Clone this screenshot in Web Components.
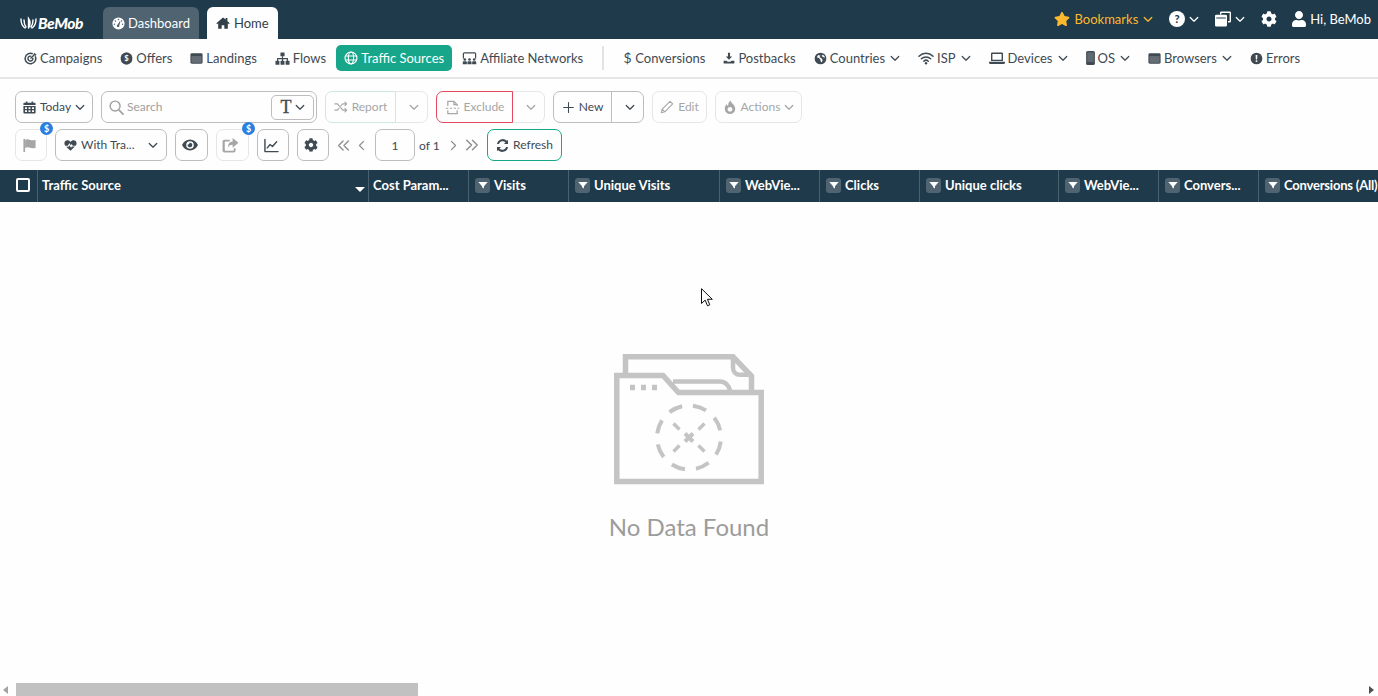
<!DOCTYPE html>
<html>
<head>
<meta charset="utf-8">
<title>BeMob</title>
<style>
  html, body { margin: 0; height: 100%; }
  body { background: #fefefe; font-family: Lato, "Open Sans", sans-serif; overflow: hidden; }
  .app { display: flex; flex-direction: column; height: 696px; position: relative; }
</style>
</head>
<body>
<div class="app">
  <bm-topbar>
    <bm-tab slot="tabs" icon="gauge" size="13">Dashboard</bm-tab>
    <bm-tab slot="tabs" icon="home" size="14" style="gap:4px" active>Home</bm-tab>
    <bm-top-item slot="right" icon="star" chev color="#fdb92e">Bookmarks</bm-top-item>
    <bm-top-item slot="right" icon="question" chev></bm-top-item>
    <bm-top-item slot="right" icon="copies" chev></bm-top-item>
    <bm-top-item slot="right" icon="cog"></bm-top-item>
    <bm-top-item slot="right" icon="user" style="gap:3px;margin-left:-2px">Hi, BeMob</bm-top-item>
  </bm-topbar>

  <bm-nav>
    <bm-nav-item icon="target" size="13">Campaigns</bm-nav-item>
    <bm-nav-item icon="offer" size="13">Offers</bm-nav-item>
    <bm-nav-item icon="window" size="13">Landings</bm-nav-item>
    <bm-nav-item icon="sitemap" size="15">Flows</bm-nav-item>
    <bm-nav-item icon="globe" size="14" active>Traffic Sources</bm-nav-item>
    <bm-nav-item icon="network" size="15">Affiliate Networks</bm-nav-item>
    <bm-nav-sep></bm-nav-sep>
    <bm-nav-item icon="dollar">Conversions</bm-nav-item>
    <bm-nav-item icon="download" size="12">Postbacks</bm-nav-item>
    <bm-nav-item icon="earth" size="13" chev>Countries</bm-nav-item>
    <bm-nav-item icon="wifi" size="16" chev>ISP</bm-nav-item>
    <bm-nav-item icon="laptop" size="16" chev>Devices</bm-nav-item>
    <bm-nav-item icon="mobile" chev>OS</bm-nav-item>
    <bm-nav-item icon="window" size="13" chev>Browsers</bm-nav-item>
    <bm-nav-item icon="alert" size="13">Errors</bm-nav-item>
  </bm-nav>

  <bm-toolbar>
    <bm-row>
      <bm-btn icon="calendar" chev style="width:78px">Today</bm-btn>
      <bm-search></bm-search>
      <bm-split>
        <bm-btn icon="shuffle" size="14" off side="l" edge="#cfe8e2" style="width:71px">Report</bm-btn>
        <bm-btn chev off side="r" style="width:33px"></bm-btn>
      </bm-split>
      <bm-split>
        <bm-btn icon="exclude" size="15" off side="l" edge="#e2495f" style="width:77px">Exclude</bm-btn>
        <bm-btn chev off side="r" style="width:33px"></bm-btn>
      </bm-split>
      <bm-split>
        <bm-btn icon="plus" side="l" style="width:59px">New</bm-btn>
        <bm-btn chev side="r" style="width:33px"></bm-btn>
      </bm-split>
      <bm-btn icon="pencil" size="14" off style="width:55px">Edit</bm-btn>
      <bm-btn icon="fire" size="14" chev off style="width:87px">Actions</bm-btn>
    </bm-row>
    <bm-row>
      <bm-btn icon="flag" size="15" off badge style="width:32px"></bm-btn>
      <bm-btn icon="heartbeat" chev spread style="width:112px">With Tra...</bm-btn>
      <bm-btn icon="eye" size="16" style="width:33px"></bm-btn>
      <bm-btn icon="share" size="17" off badge style="width:33px"></bm-btn>
      <bm-btn icon="chart" size="15" style="width:32px"></bm-btn>
      <bm-btn icon="cog" size="14" style="width:32px"></bm-btn>
      <bm-pager></bm-pager>
      <bm-btn icon="sync" edge="#17a689" style="width:75px">Refresh</bm-btn>
    </bm-row>
  </bm-toolbar>

  <bm-grid-head>
    <bm-th check></bm-th>
    <bm-th sort>Traffic Source</bm-th>
    <bm-th plain>Cost Param...</bm-th>
    <bm-th>Visits</bm-th>
    <bm-th>Unique Visits</bm-th>
    <bm-th>WebVie...</bm-th>
    <bm-th>Clicks</bm-th>
    <bm-th>Unique clicks</bm-th>
    <bm-th>WebVie...</bm-th>
    <bm-th>Convers...</bm-th>
    <bm-th style="letter-spacing:-.2px">Conversions (All)</bm-th>
  </bm-grid-head>

  <bm-empty>No Data Found</bm-empty>
  <bm-scrollbar></bm-scrollbar>
  <bm-cursor></bm-cursor>
</div>

<script>
// all icons drawn on a 16x16 box unless the entry gives its own viewBox
const hole = (x, y, r) => `M${x-r} ${y}a${r} ${r} 0 1 0 ${2*r} 0a${r} ${r} 0 1 0 ${-2*r} 0z`;
const line = (d, w) => `<path d="${d}" fill="none" stroke="currentColor" stroke-width="${w||1.5}" stroke-linecap="round" stroke-linejoin="round"/>`;
const ICONS = {
  gauge: `<path fill-rule="evenodd" d="M8 .5a7.500 7.500 0 1 1 0 15A7.500 7.500 0 0 1 8 .5z${hole(8,3.2,.9)}${hole(4.200,5,.9)}${hole(3,8.800,.9)}${hole(13,8.800,.9)}${hole(11.800,5,.9)}M7 9.200l2.600-4 .8.4-1.400 4.400a1.600 1.600 0 1 1-2-.8z"/>`,
  home: `<path d="M8 1.600L.4 8.300l.9 1L2.500 8.300V14.600h4v-4h3v4h4V8.300l1.200 1 .9-1L13 5.700V2.400h-2v1.500z"/>`,
  star: {vb:'0 0 576 512', s:`<path d="M259.300 17.800L194 150.200 47.900 171.500c-26.200 3.800-36.700 36.100-17.700 54.600l105.700 103-25 145.500c-4.500 26.300 23.200 46 46.400 33.700L288 439.600l130.700 68.700c23.200 12.200 50.900-7.400 46.400-33.700l-25-145.500 105.700-103c19-18.500 8.500-50.800-17.700-54.600L382 150.200 316.700 17.800c-11.700-23.600-45.600-23.900-57.400 0z"/>`},
  question: `<circle cx="8" cy="8" r="8"/><text x="8" y="11.800" text-anchor="middle" font-family="Lato" font-weight="900" font-size="11" fill="#1f3a4a">?</text>`,
  copies: `<path fill-rule="evenodd" d="M5 1.800a1.300 1.300 0 0 1 1.300-1.300h8.400A1.300 1.300 0 0 1 16 1.800v8.400a1.300 1.300 0 0 1-1.300 1.300H13v-1.400h1.600V1.900H6.400v1.600H5z"/><path fill-rule="evenodd" d="M1.300 3.800h9.400a1.300 1.300 0 0 1 1.300 1.300v9.100a1.300 1.300 0 0 1-1.300 1.300H1.300A1.300 1.300 0 0 1 0 14.200V5.100a1.300 1.300 0 0 1 1.300-1.300zM1.300 6.600v.8h9.400v-.8z"/>`,
  cog: {vb:'0 0 512 512', s:`<path d="M487.400 315.700l-42.600-24.600c4.300-23.200 4.300-47 0-70.200l42.600-24.600c4.900-2.800 7.100-8.600 5.500-14-11.100-35.600-30-67.800-54.700-94.600-3.800-4.100-10-5.100-14.800-2.300L380.800 110c-17.900-15.400-38.500-27.300-60.800-35.100V25.800c0-5.600-3.900-10.500-9.400-11.700-36.700-8.200-74.300-7.800-109.200 0-5.500 1.200-9.400 6.100-9.400 11.700V75c-22.200 7.900-42.800 19.800-60.800 35.100L88.700 85.500c-4.900-2.800-11-1.900-14.800 2.300-24.700 26.700-43.600 58.900-54.700 94.600-1.700 5.400.6 11.200 5.500 14L67.300 221c-4.300 23.200-4.300 47 0 70.200l-42.600 24.600c-4.900 2.800-7.100 8.600-5.500 14 11.100 35.600 30 67.800 54.700 94.600 3.800 4.100 10 5.100 14.800 2.300l42.600-24.600c17.900 15.400 38.500 27.300 60.800 35.100v49.200c0 5.600 3.900 10.500 9.400 11.700 36.700 8.200 74.300 7.800 109.200 0 5.500-1.200 9.400-6.100 9.400-11.700v-49.200c22.200-7.900 42.800-19.800 60.800-35.100l42.600 24.600c4.900 2.800 11 1.900 14.800-2.300 24.700-26.700 43.600-58.900 54.700-94.600 1.500-5.500-.7-11.300-5.600-14.100zM256 336c-44.100 0-80-35.900-80-80s35.900-80 80-80 80 35.900 80 80-35.900 80-80 80z"/>`},
  user: {vb:'0 0 448 512', s:`<path d="M224 256c70.700 0 128-57.300 128-128S294.700 0 224 0 96 57.300 96 128s57.300 128 128 128zm89.600 32h-16.700c-22.200 10.200-46.900 16-72.900 16s-50.600-5.800-72.900-16h-16.700C60.200 288 0 348.200 0 422.400V464c0 26.500 21.500 48 48 48h352c26.500 0 48-21.500 48-48v-41.600c0-74.200-60.200-134.400-134.400-134.400z"/>`},
  target: `<path d="M13.800 5.200A6.500 6.500 0 1 1 10.800 2.200" fill="none" stroke="currentColor" stroke-width="1.900"/><path d="M10.700 7a3 3 0 1 1-1.700-1.700" fill="none" stroke="currentColor" stroke-width="1.800"/><path d="M8 8l5-5" stroke="currentColor" stroke-width="1.600"/><path d="M11.500 2.500l2-1.500.5 1.500 1.500.5-1.500 2z"/>`,
  offer: `<path d="M8 .3l3.200 1 2.900 2 1 3.200v3l-1 3.200-2.900 2-3.200 1.100-3.200-1.100-2.900-2-1-3.200v-3l1-3.200 2.900-2z"/><text x="8" y="11.400" text-anchor="middle" font-family="Lato" font-weight="700" font-size="9.500" fill="#fefefe">$</text>`,
  window: `<rect x=".5" y="1.500" width="15" height="13" rx="1.800"/><rect x="1.800" y="5" width="12.400" height="8.300" fill="#fff" opacity=".2"/>`,
  sitemap: `<rect x="5.800" y="1.500" width="4.400" height="4.200" rx=".6"/><rect x=".5" y="10.500" width="4.200" height="4.200" rx=".6"/><rect x="5.900" y="10.500" width="4.200" height="4.200" rx=".6"/><rect x="11.300" y="10.500" width="4.200" height="4.200" rx=".6"/><path d="M7.400 5.500h1.200v2h5.200v3.100h-1.200V8.700H8.600v1.900H7.400V8.700H3.400v1.900H2.200V7.500h5.200z"/>`,
  globe: `<g fill="none" stroke="currentColor" stroke-width="1.300"><circle cx="8" cy="8" r="6.800"/><ellipse cx="8" cy="8" rx="3" ry="6.800"/><path d="M1.500 5.700h13M1.500 10.300h13"/></g>`,
  network: `<path fill="none" stroke="currentColor" stroke-width="1.300" d="M1.500 8V3a1 1 0 0 1 1-1h11a1 1 0 0 1 1 1v5"/><circle cx="3" cy="9" r="1.400"/><circle cx="8" cy="9" r="1.400"/><circle cx="13" cy="9" r="1.400"/><path d="M.8 14v-2a1 1 0 0 1 1-1h2.400a1 1 0 0 1 1 1v2zM5.800 14v-2a1 1 0 0 1 1-1h2.400a1 1 0 0 1 1 1v2zM10.800 14v-2a1 1 0 0 1 1-1h2.400a1 1 0 0 1 1 1v2z"/>`,
  dollar: {vb:'0 0 9 16', w:9, h:16, s:`<text x="4.500" y="13" text-anchor="middle" font-family="Lato" font-weight="400" font-size="14">$</text>`},
  download: `<path d="M6.600 1h2.800v5h2.800L8 10.400 3.800 6h2.800z"/><path d="M.8 11.500h3.800L6.200 13h3.600l1.600-1.500h3.800v3a.8.8 0 0 1-.8.8H1.600a.8.8 0 0 1-.8-.8z"/>`,
  earth: `<path fill-rule="evenodd" d="M8 .8a7.200 7.200 0 1 1 0 14.400A7.200 7.200 0 0 1 8 .8zM5 3.800L3.500 6.500l2.500 1 1.800 1.700.4 2.500 1.500 1 1-3-1.500-2L6.500 6l1.800-1.500zM10.500 3.500l-1 1.500 2 1.500 2 .5-.8-2.300z"/>`,
  wifi: line('M1 6.200a10 10 0 0 1 14 0M3.400 8.800a6.600 6.600 0 0 1 9.200 0M5.800 11.200a3.200 3.200 0 0 1 4.400 0',1.500)+`<circle cx="8" cy="13.300" r="1.200"/>`,
  laptop: `<path fill-rule="evenodd" d="M3 2.500h10a1 1 0 0 1 1 1V11H2V3.500a1 1 0 0 1 1-1zM3.400 3.900V9.700h9.200V3.900z"/><path d="M0 11.800h16v.7a1.500 1.500 0 0 1-1.500 1.500h-13A1.500 1.500 0 0 1 0 12.500z"/>`,
  mobile: {vb:'0 0 10 16', w:9, h:14, s:`<rect x="0" y="0" width="10" height="16" rx="1.800"/><rect x="1.300" y="1.500" width="7.400" height="11" fill="#fff" opacity=".18"/>`},
  alert: `<path fill-rule="evenodd" d="M8 .8a7.200 7.200 0 1 1 0 14.400A7.200 7.200 0 0 1 8 .8zM6.900 3.800l.3 5.300h1.600l.3-5.300zM8 10a1.200 1.200 0 1 0 0 2.400A1.200 1.200 0 0 0 8 10z"/>`,
  calendar: `<path fill-rule="evenodd" d="M3.500.5h2V2h5V.5h2V2h1.800c.6 0 1.200.5 1.200 1.200V5h-15V3.200C.500 2.500 1 2 1.700 2h1.800zM.5 6h15v8.500c0 .6-.5 1-1.200 1H1.700c-.7 0-1.200-.4-1.200-1zM2.500 7.800v1.900h2.400V7.800zM6.800 7.800v1.900h2.400V7.800zM11.100 7.800v1.900h2.400V7.800zM2.500 11.500v1.900h2.400v-1.900zM6.800 11.500v1.900h2.400v-1.900zM11.100 11.500v1.900h2.400v-1.900z"/>`,
  search: line('M11 11l4 4',1.800)+`<circle cx="6.500" cy="6.500" r="5.300" fill="none" stroke="currentColor" stroke-width="1.500"/>`,
  shuffle: line('M1 4.500h3l6 7h4M1 11.500h3l1.600-1.900M8 6.500l2-2h4M12.500 2.500l2 2-2 2M12.500 9.500l2 2-2 2',1.300),
  exclude: `<g fill="none" stroke="currentColor" stroke-width="1.300"><path d="M3 6.500V1.500h6.500L13 5v1.500M9.500 1.500V5H13M3 11v3.500h10V11"/><path d="M.8 8.800h2.600M5.200 8.800h2.400M9.400 8.800h2.400M13.300 8.800h2"/></g>`,
  plus: line('M8 2v12M2 8h12',1.300),
  pencil: line('M1.500 14.500l1-4L11.500 1.500l3 3-9 9zM2.500 10.500l3 3',1.200),
  fire: `<path d="M8.500.5c.4 2.800 5.500 5 5.500 9.500a6 6 0 0 1-12 0c0-2.400 1.200-4 2.400-5.300.2 1.200.7 2 1.500 2.500C5.700 4.500 6.500 2 8.500.5z"/><circle cx="8" cy="10.700" r="2.700" fill="#fefefe"/>`,
  flag: `<path d="M1.500 1h1.800v14H1.500z"/><path d="M3.300 2c2-.8 3.500-.8 5.500 0s3.500.6 5.700-.2v8.500c-2.200.8-3.700 1-5.700.2s-3.500-.8-5.500 0z"/>`,
  heartbeat: `<path d="M8 14.500L2.600 9.600h3l1.200-1.800 1.800 3 1.200-1.600h3.600z"/><path d="M1.600 8.200C.8 7.200.5 6.200.5 5.200.5 3 2.200 1.600 4.200 1.600c1.500 0 2.900.8 3.800 2 .9-1.200 2.300-2 3.800-2 2 0 3.700 1.400 3.700 3.600 0 1-.3 2-1.100 3h-3.500L9.400 6 8.200 7.700 6.500 5l-1.600 3.200z"/>`,
  eye: `<path fill-rule="evenodd" d="M8 2.500c3.500 0 6.400 2.200 8 5.500-1.600 3.300-4.500 5.500-8 5.500S1.600 11.300 0 8c1.600-3.300 4.500-5.500 8-5.500zM8 4.200a3.800 3.800 0 1 0 0 7.600 3.800 3.800 0 0 0 0-7.600z"/><path d="M8 5.700a2.300 2.300 0 1 1-2.200 1.600 1.100 1.100 0 0 0 1.500-1.500c.2-.1.500-.1.700-.1z"/>`,
  share: `<path d="M2.300 2.500h5v1.700H3.200a.6.6 0 0 0-.6.6v7.500c0 .3.300.6.600.6h7.300c.3 0 .6-.3.6-.6V10.500h1.700v2.300c0 1-.8 1.700-1.700 1.700H2.300c-1 0-1.800-.7-1.800-1.700V4.200c0-1 .8-1.700 1.800-1.700z"/><path d="M10 1l5.500 4.500L10 10V7.300c-2.500 0-3.800.8-4.500 3 0-3.800 1.500-5.800 4.500-6z"/>`,
  chart: line('M1 1.500V14.500H15',1.500)+line('M3.500 10.500l3-3.500 2.500 2 4.500-5',1.500),
  sync: `<path d="M13.300 2.300l1.500-1v5H9.800l1.900-1.900A4.700 4.700 0 0 0 3.600 6.300H1.300a7 7 0 0 1 12-4z"/><path d="M2.700 13.700l-1.500 1v-5h5L4.300 11.600a4.700 4.700 0 0 0 8.100-1.900h2.300a7 7 0 0 1-12 4z"/>`,
  chevron: line('M2 5.500L8 11.500l6-6',2),
  dleft: line('M7.500 2.500L2 8l5.500 5.500M14 2.500L8.500 8l5.500 5.500',1.700),
  dright: line('M2 2.500L7.500 8 2 13.500M8.500 2.500L14 8l-5.500 5.500',1.700),
  left: line('M11 2L5 8l6 6',1.800),
  right: line('M5 2l6 6-6 6',1.800),
  funnel: `<path d="M.5 3h15L9.500 10v3.500L6.500 11.500V10z"/>`
};

function iconMarkup(name, size) {
  const ic = ICONS[name] || '';
  const vb = ic.vb || '0 0 16 16';
  const body = ic.s || ic;
  const w = ic.w || size, h = ic.h || size;
  return `<svg width="${w}" height="${h}" viewBox="${vb}" fill="currentColor" style="display:block;flex:none">${body}</svg>`;
}

// small helper so each class below stays short
function el(name, css, render) {
  customElements.define(name, class extends HTMLElement {
    constructor() {
      super();
      this.attachShadow({mode: 'open'});
    }
    connectedCallback() {
      this.shadowRoot.innerHTML = `<style>${css}</style>` + render(this);
    }
  });
}

el('bm-topbar', `
  :host { display: flex; align-items: flex-end; height: 39px; background: #1f3a4a; color: #fff; flex: none; }
  .logo { display: flex; align-items: center; gap: 1px; margin: 6px 20px 0 20px; align-self: center; font: italic 900 15.500px Lato, sans-serif; letter-spacing: -.4px; }
  .tabs { display: flex; gap: 8px; }
  .right { display: flex; align-items: center; gap: 16px; margin: 0 7px 2px auto; align-self: center; }
`, () => `
  <div class="logo">
    <svg width="17" height="14" viewBox="0 0 17 14" fill="none" stroke="#fff" stroke-width="1.400" stroke-linecap="round">
      <path d="M1 3c0 4 1 7 4 9M4 4c0 3 .6 5 2 7M8.500 12V2.500c2 3 2 6.500 0 9.500M16 3c0 4-1 7-4 9M13 4c0 3-.6 5-2 7"/>
    </svg>
    <span>BeMob</span>
  </div>
  <div class="tabs"><slot name="tabs"></slot></div>
  <div class="right"><slot name="right"></slot></div>`);

el('bm-tab', `
  :host { display: flex; align-items: center; gap: 3px; height: 32px; padding: 0 9px; box-sizing: border-box; border-radius: 6px 6px 0 0; background: #4f6370; color: #fff; font: 13px Lato, sans-serif; }
  :host([active]) { background: #fefefe; color: #333f48; }
`, h => iconMarkup(h.getAttribute('icon'), h.getAttribute('size')) + '<slot></slot>');

el('bm-top-item', `
  :host { display: flex; align-items: center; gap: 4px; color: #fff; font: 13px Lato, sans-serif; }
`, h => {
  const c = h.getAttribute('color');
  if (c) h.style.color = c;
  return iconMarkup(h.getAttribute('icon'), 16) + '<slot></slot>' +
    (h.hasAttribute('chev') ? `<span style="margin-left:${h.textContent ? 1 : 0}px">${iconMarkup('chevron', 10)}</span>` : '');
});

el('bm-nav', `
  :host { display: flex; align-items: center; gap: 2px; height: 38px; padding: 0 16px; border-bottom: 2px solid #e6e6e6; flex: none; color: #3f4a52; font: 13px Lato, sans-serif; }
`, () => '<slot></slot>');

el('bm-nav-item', `
  :host { display: flex; align-items: center; gap: 3px; height: 26px; padding: 0 8px; border-radius: 5px; white-space: nowrap; }
  :host([active]) { background: #17a689; color: #fff; }
  .ch { margin-left: 2px; }
`, h => iconMarkup(h.getAttribute('icon'), h.getAttribute('size')) + '<slot></slot>' +
  (h.hasAttribute('chev') ? `<span class="ch">${iconMarkup('chevron', 10)}</span>` : ''));

el('bm-nav-sep', `
  :host { display: block; flex: none; width: 2px; height: 24px; background: #e3e3e3; margin: 0 9px 0 9px; }
`, () => '');

el('bm-toolbar', `
  :host { display: flex; flex-direction: column; gap: 6px; padding: 12px 15px 9px; flex: none; }
`, () => '<slot></slot>');

el('bm-row', `
  :host { display: flex; align-items: center; gap: 8px; height: 32px; }
`, () => '<slot></slot>');

el('bm-split', `
  :host { display: flex; }
`, () => '<slot></slot>');

el('bm-btn', `
  :host { display: flex; align-items: center; justify-content: center; gap: 4px; position: relative; height: 32px; box-sizing: border-box; border: 1px solid #bdbdbd; border-radius: 7px; color: #3f4a52; font: 12px Lato, sans-serif; white-space: nowrap; }
  :host([off]) { border-color: #e6e6e6; color: #a6a6a6; }
  :host([side="l"]) { border-radius: 7px 0 0 7px; }
  :host([side="r"]) { border-radius: 0 7px 7px 0; margin-left: -1px; }
  :host([spread]) { justify-content: flex-start; padding: 0 8px 0 8px; }
  :host([spread]) .ch { margin-left: auto; }
  .txt { position: relative; top: -.5px; }
  .badge { position: absolute; top: -8px; right: -7px; width: 13px; height: 13px; border-radius: 50%; background: #2b7de0; color: #fff; font: 700 9px/13px Lato, sans-serif; text-align: center; }
`, h => {
  const edge = h.getAttribute('edge');
  if (edge) { h.style.borderColor = edge; h.style.zIndex = 1; }
  const ic = h.getAttribute('icon');
  return (ic ? iconMarkup(ic, h.getAttribute('size') || 13) : '') + '<span class="txt"><slot></slot></span>' +
    (h.hasAttribute('chev') ? `<span class="ch">${iconMarkup('chevron', 10)}</span>` : '') +
    (h.hasAttribute('badge') ? '<span class="badge">$</span>' : '');
});

el('bm-search', `
  :host { display: flex; align-items: center; gap: 3px; width: 216px; height: 32px; box-sizing: border-box; border: 1px solid #bdbdbd; border-radius: 7px; padding: 0 2px 0 7px; color: #a0a0a0; font: 12px Lato, sans-serif; }
  .ph { flex: 1; position: relative; top: -.5px; }
  .type { display: flex; align-items: center; justify-content: center; gap: 3px; width: 43px; height: 25px; box-sizing: border-box; border: 1px solid #bdbdbd; border-radius: 5px; color: #3f4a52; }
  .t { font: 400 18px/20px "Liberation Serif", serif; -webkit-text-stroke: .3px currentColor; }
`, () => `${iconMarkup('search', 15)}<span class="ph">Search</span>
  <span class="type"><span class="t">T</span>${iconMarkup('chevron', 10)}</span>`);

el('bm-pager', `
  :host { display: flex; align-items: center; height: 32px; color: #8f8f8f; font: 12px Lato, sans-serif; }
  .box { display: flex; align-items: center; justify-content: center; width: 40px; height: 32px; box-sizing: border-box; border: 1px solid #bdbdbd; border-radius: 7px; color: #3f4a52; margin: 0 4px 0 8px; }
  .of { color: #3f4a52; width: 21px; margin-right: 8px; }
  .gap { width: 6px; }
`, () => `${iconMarkup('dleft', 13)}<span class="gap"></span>${iconMarkup('left', 11)}
  <span class="box">1</span><span class="of">of 1</span>
  ${iconMarkup('right', 11)}<span class="gap"></span>${iconMarkup('dright', 14)}`);

el('bm-grid-head', `
  :host { display: grid; grid-template-columns: 38px 331px 100px 100px 151px 100px 100px 139px 100px 100px 140px; height: 32px; background: #1f3a4a; overflow: hidden; flex: none; }
`, () => '<slot></slot>');

el('bm-th', `
  :host { display: flex; align-items: center; gap: 4px; min-width: 0; padding: 0 0 2px 4px; box-sizing: border-box; border-right: 1px solid #4a6170; color: #fff; font: 700 13px Lato, sans-serif; white-space: nowrap; position: relative; }
  :host([check]) { padding: 0 0 2px 16px; }
  :host(:last-child) { border-right: 0; }
  .fb { display: flex; align-items: center; justify-content: center; width: 15px; height: 15px; margin-left: 2px; border-radius: 3px; background: #4f6370; flex: none; }
  .box { width: 10px; height: 10px; border: 2px solid #fff; border-radius: 2px; }
  .sort { margin-left: auto; margin-right: 3px; margin-top: 9px; width: 0; height: 0; border: 5px solid transparent; border-top: 5px solid #fff; border-bottom: 0; }
`, h => {
  if (h.hasAttribute('check')) return '<span class="box"></span>';
  const fb = (h.hasAttribute('sort') || h.hasAttribute('plain')) ? '' :
    `<span class="fb">${iconMarkup('funnel', 10)}</span>`;
  return fb + '<slot></slot>' + (h.hasAttribute('sort') ? '<span class="sort"></span>' : '');
});

el('bm-empty', `
  :host { display: flex; flex-direction: column; align-items: center; flex: 1; padding-top: 152px; box-sizing: border-box; color: #9c9c9c; font: 24px Lato, sans-serif; }
  svg { display: block; margin-bottom: 27px; }
`, () => `
  <svg width="150" height="131" viewBox="0 0 150 131" fill="none" stroke="#c4c4c4" stroke-width="5.500">
    <path d="M11.500 19V2.800H119L137.500 22v15"/>
    <path d="M119 2.800v11c0 4 3 7 7 7h11.500" stroke-width="4.500"/>
    <path d="M2.800 21.500H49L64.500 38.500H147.200V127.500H2.800z"/>
    <path d="M59 27.500H106c5 0 9 4 10 9" stroke-width="4.500"/>
    <path d="M16 33.500h5M27 33.500h5M38 33.500h5"/>
    <circle cx="75" cy="83.500" r="32" stroke-width="4" stroke-dasharray="14 11.130" transform="rotate(-83 75 83.500)"/>
    <path d="M59.500 69.500L65.500 75.500M90.500 69.500L84.500 75.500M59.500 97.500L65.500 91.500M90.500 97.500L84.500 91.500" stroke-width="3.500"/>
    <path d="M71 79.500l8 8M79 79.500l-8 8" stroke-width="4"/>
  </svg>
  <slot></slot>`);

el('bm-scrollbar', `
  :host { display: flex; align-items: center; height: 13px; background: #fefefe; flex: none; }
  .a { width: 0; height: 0; border: 4px solid transparent; flex: none; }
  .l { border-right: 5px solid #a3a3a3; border-left: 0; margin-left: 3px; }
  .r { border-left: 5px solid #505050; border-right: 0; margin-right: 4px; margin-left: auto; }
  .thumb { width: 402px; height: 13px; margin-left: 8px; background: #c1c1c1; }
`, () => '<span class="a l"></span><span class="thumb"></span><span class="a r"></span>');

// mouse pointer caught in the screenshot, sits over the page
el('bm-cursor', `
  :host { position: absolute; left: 701px; top: 288px; display: block; width: 12px; height: 19px; }
`, () => `<svg width="12" height="19" viewBox="0 0 12 19"><path d="M.5.700V15.500l3.600-3.400 2.400 5.700 2.300-1-2.400-5.500h4.900z" fill="#fff" stroke="#111" stroke-width="1"/></svg>`);
</script>
</body>
</html>
